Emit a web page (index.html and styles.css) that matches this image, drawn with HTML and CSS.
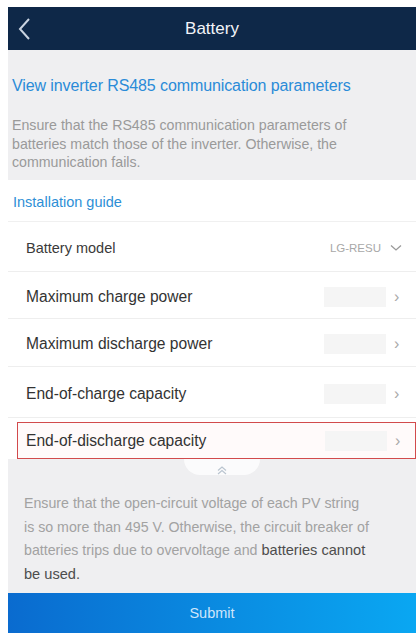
FILE: index.html
```html
<!DOCTYPE html>
<html lang="en">
<head>
    <meta charset="UTF-8">
    <meta name="viewport" content="width=device-width, initial-scale=1.0">
    <title>Battery</title>
    <link rel="stylesheet" href="styles.css">
</head>
<body>
<div class="screen">
    <!-- top bar -->
    <div class="topbar">
        <svg class="back" width="14" height="24" viewBox="0 0 14 24">
            <path d="M11 2 L2 12 L11 22" fill="none" stroke="#c9d3e0" stroke-width="2"/>
        </svg>
        <p class="title">Battery</p>
    </div>

    <div class="intro">
        <p class="link">View inverter RS485 communication parameters</p>
        <p class="desc">Ensure that the RS485 communication parameters of batteries match those of the inverter. Otherwise, the communication fails.</p>
    </div>

    <div class="guide">Installation guide</div>

    <div class="params">
        <div class="item first">
            <span class="label small">Battery model</span>
            <span class="value">LG-RESU</span>
            <svg class="down" width="12" height="8" viewBox="0 0 12 8">
                <path d="M1 1.5 L6 6 L11 1.5" fill="none" stroke="#9a9a9a" stroke-width="1.3"/>
            </svg>
        </div>
        <div class="item second">
            <span class="label">Maximum charge power</span>
            <span class="field"></span>
            <span class="arrow">&rsaquo;</span>
        </div>
        <div class="item third">
            <span class="label">Maximum discharge power</span>
            <span class="field"></span>
            <span class="arrow">&rsaquo;</span>
        </div>
        <div class="item fourth">
            <span class="label">End-of-charge capacity</span>
            <span class="field"></span>
            <span class="arrow">&rsaquo;</span>
        </div>
        <div class="item marked">
            <span class="label">End-of-discharge capacity</span>
            <span class="field"></span>
            <span class="arrow">&rsaquo;</span>
        </div>
    </div>

    <div class="notice">
        <div class="tab">
            <svg width="10" height="9" viewBox="0 0 10 9">
                <path d="M1 4.5 L5 1 L9 4.5 M1 8 L5 4.5 L9 8" fill="none" stroke="#b9c4cf" stroke-width="1.1"/>
            </svg>
        </div>
        <p class="note">Ensure that the open-circuit voltage of each PV string<br>
            is so more than 495 V. Otherwise, the circuit breaker of<br>
            batteries trips due to overvoltage and <span class="strong">batteries cannot<br>
            be used.</span></p>
    </div>

    <button type="button" class="submit">Submit</button>
</div>
</body>
</html>
```

FILE: styles.css
```css
body{
    margin: 0;
    background-color: #fff;
    font-family: "Liberation Sans", Arial, sans-serif;
}
p{
    margin: 0;
}
.screen{
    margin: 7px 2px 0 8px;
}

/* top bar */
.topbar{
    height: 43px;
    background-color: #0e2848;
    display: flex;
    align-items: center;
    position: relative;
}
.back{
    margin-left: 10px;
}
.title{
    position: absolute;
    left: 0;
    right: 0;
    text-align: center;
    color: #f2f4f8;
    font-size: 17px;
    pointer-events: none;
}

/* intro */
.intro{
    background-color: #efeff1;
    height: 130px;
    box-sizing: border-box;
    padding: 27px 40px 0 4px;
}
.link{
    color: #2a8bd8;
    font-size: 16px;
    letter-spacing: -0.1px;
    white-space: nowrap;
}
.desc{
    color: #9a9a9a;
    font-size: 14.2px;
    line-height: 18.5px;
    margin-top: 21px;
}

.guide{
    height: 41px;
    line-height: 44px;
    padding-left: 5px;
    color: #2d8fd6;
    font-size: 14.5px;
    border-bottom: 1px solid #f0f0f0;
}

/* parameter rows */
.item{
    display: flex;
    align-items: center;
    padding: 3px 14px 0 18px;
    border-bottom: 1px solid #eeeeee;
    box-sizing: border-box;
}
.first{
    height: 50px;
}
.second{
    height: 47px;
}
.third{
    height: 48px;
}
.fourth{
    height: 51px;
}
.label{
    flex: 1;
    color: #333;
    font-size: 15.6px;
}
.label.small{
    font-size: 14.5px;
    color: #3a3a3a;
}
.value{
    color: #a8a8a8;
    font-size: 11.5px;
    margin-right: 9px;
}
.field{
    width: 62px;
    height: 20px;
    background-color: #f5f5f5;
    margin-right: 8px;
}
.arrow{
    color: #a9a9a9;
    font-size: 16px;
    width: 8px;
}
.marked{
    height: 37px;
    margin: 4px 0 0 9px;
    border: 1.5px solid #d24a4c;
    padding: 1px 12px 0 8px;
    background-color: #fffafa;
}

/* bottom notice */
.notice{
    background-color: #efeff1;
    height: 134px;
    box-sizing: border-box;
    padding: 0 10px 0 16px;
    position: relative;
}
.tab{
    position: absolute;
    left: 176px;
    top: 0;
    width: 76px;
    height: 16px;
    background-color: #fbfbfc;
    border-radius: 0 0 30px 30px;
    display: flex;
    justify-content: center;
    padding-top: 7px;
    box-sizing: border-box;
}
.note{
    padding-top: 33px;
    color: #a2a2a2;
    font-size: 14.2px;
    line-height: 23.5px;
}
.strong{
    color: #4d4d4d;
    font-size: 14.6px;
    line-height: 20px;
}

.submit{
    display: block;
    width: 100%;
    height: 40px;
    border: none;
    background-image: linear-gradient(to right, #0a6bcf, #0a8de2 55%, #0aa7f2);
    color: #cfe6fb;
    font-family: "Liberation Sans", Arial, sans-serif;
    font-size: 14.5px;
}
```
